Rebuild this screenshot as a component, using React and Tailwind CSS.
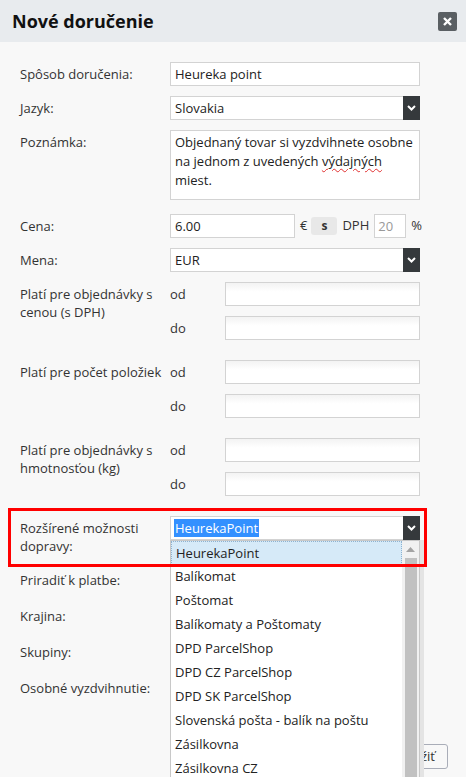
import React from "react"

const font = { fontFamily: '"Open Sans", "Noto Sans", sans-serif' }

const options = [
  "HeurekaPoint",
  "Balíkomat",
  "Poštomat",
  "Balíkomaty a Poštomaty",
  "DPD ParcelShop",
  "DPD CZ ParcelShop",
  "DPD SK ParcelShop",
  "Slovenská pošta - balík na poštu",
  "Zásilkovna",
  "Zásilkovna CZ",
]

const Chevron = () => (
  <svg width="9" height="6" viewBox="0 0 9 6">
    <path d="M1 1 L4.5 4.5 L8 1" stroke="#fff" strokeWidth="2" fill="none" />
  </svg>
)

const Input = ({ value = "", className = "" }) => (
  <div
    className={`h-[24px] border border-[#d3d3d3] bg-gradient-to-b from-[#f3f3f3] to-white to-[40%] px-[4px] text-[13px] leading-[22px] text-[#222] ${className}`}
  >
    {value}
  </div>
)

const Select = ({ value, highlight }) => (
  <div className="flex h-[24px] w-[250px] border border-[#d3d3d3] bg-white">
    <div className="flex-1 px-[3px] pt-[1px] text-[13px] leading-[20px] text-[#222]">
      {highlight ? (
        <span className="bg-[#3390ff] px-[1px] text-white">{value}</span>
      ) : (
        <span className="px-[1px]">{value}</span>
      )}
    </div>
    <div className="-my-px -mr-px flex w-[17px] items-center justify-center bg-[#35393c]">
      <Chevron />
    </div>
  </div>
)

const Label = ({ children, className = "" }) => (
  <div className={`pt-[3px] text-[13px] leading-[18px] text-[#333] ${className}`}>
    {children}
  </div>
)

const RangeRow = ({ label }) => (
  <div className="flex">
    <Label className="w-[150px]">{label}</Label>
    <div className="flex flex-col gap-[10px]">
      <div className="flex">
        <Label className="w-[55px]">od</Label>
        <Input className="w-[195px]" />
      </div>
      <div className="flex">
        <Label className="w-[55px]">do</Label>
        <Input className="w-[195px]" />
      </div>
    </div>
  </div>
)

export default function App() {
  return (
    <div className="h-[777px] w-[466px] overflow-hidden bg-[#f8f8f8]" style={font}>
      <div className="flex h-[42px] items-center justify-between bg-[#e8ebee] pl-[12px] pr-[9px]">
        <h1 className="text-[18px] font-bold text-[#111]">Nové doručenie</h1>
        <button className="flex h-[19px] w-[19px] items-center justify-center rounded-[2px] bg-[#5a5f63]">
          <svg width="9" height="9" viewBox="0 0 9 9">
            <path d="M1 1 L8 8 M8 1 L1 8" stroke="#fff" strokeWidth="2.4" />
          </svg>
        </button>
      </div>

      <div className="flex flex-col px-[20px] pt-[20px]">
        <div className="flex">
          <Label className="w-[150px]">Spôsob doručenia:</Label>
          <Input value="Heureka point" className="w-[250px] from-white" />
        </div>

        <div className="mt-[10px] flex">
          <Label className="w-[150px]">Jazyk:</Label>
          <Select value="Slovakia" />
        </div>

        <div className="mt-[10px] flex">
          <Label className="w-[150px]">Poznámka:</Label>
          <div className="h-[70px] w-[250px] border border-[#d3d3d3] bg-white px-[4px] pt-[2px] text-[13px] leading-[19px] text-[#222]">
            Objednaný tovar si vyzdvihnete osobne na jednom z uvedených{" "}
            <span className="underline decoration-[#e03030] decoration-wavy decoration-1 underline-offset-2">
              výdajných
            </span>{" "}
            miest.
          </div>
        </div>

        <div className="mt-[14px] flex">
          <Label className="w-[150px]">Cena:</Label>
          <div className="flex items-center text-[13px] text-[#333]">
            <Input value="6.00" className="w-[125px] from-white" />
            <span className="ml-[5px]">€</span>
            <span className="ml-[4px] flex h-[18px] w-[26px] items-center justify-center rounded-[3px] bg-[#e8e8e8] text-[12px] font-bold">
              s
            </span>
            <span className="ml-[5px]">DPH</span>
            <div className="ml-[5px] h-[24px] w-[32px] border border-[#d3d3d3] bg-white px-[3px] leading-[22px] text-[#999]">
              20
            </div>
            <span className="ml-[5px]">%</span>
          </div>
        </div>

        <div className="mt-[10px] flex">
          <Label className="w-[150px]">Mena:</Label>
          <Select value="EUR" />
        </div>

        <div className="mt-[10px]">
          <RangeRow
            label={
              <>
                Platí pre objednávky s<br />
                cenou (s DPH)
              </>
            }
          />
        </div>
        <div className="mt-[20px]">
          <RangeRow label="Platí pre počet položiek" />
        </div>
        <div className="mt-[20px]">
          <RangeRow
            label={
              <>
                Platí pre objednávky s<br />
                hmotnosťou (kg)
              </>
            }
          />
        </div>

        <div className="relative mt-[20px] flex">
          <Label className="w-[150px]">
            Rozšírené možnosti
            <br />
            dopravy:
          </Label>
          <div className="relative">
            <Select value="HeurekaPoint" highlight />
            <div className="absolute left-0 top-[24px] z-10 flex h-[260px] w-[250px] border border-[#c8c8c8] bg-white shadow-[4px_0_0_#e4e4e4]">
              <div className="flex-1">
                {options.map((o, i) => (
                  <div
                    key={o}
                    className={`h-[24px] px-[4px] text-[13px] leading-[23px] text-[#222] ${
                      i === 0 ? "border border-dotted border-[#8fb3d0] bg-[#d6eaf8] px-[3px] leading-[22px]" : ""
                    }`}
                  >
                    {o}
                  </div>
                ))}
              </div>
              <div className="flex w-[17px] flex-col items-center bg-[#f1f1f1]">
                <svg className="mt-[6px]" width="9" height="5" viewBox="0 0 9 5">
                  <path d="M0 5 L4.5 0 L9 5 Z" fill="#a3a3a3" />
                </svg>
                <div className="mt-[6px] w-[12px] flex-1 bg-[#c1c1c1]" />
              </div>
            </div>
          </div>
          <div className="pointer-events-none absolute -left-[12px] -top-[8px] z-20 h-[59px] w-[419px] border-[3px] border-[#ff0000]" />
        </div>

        <div className="mt-[13px] flex flex-col gap-[12px]">
          <div className="flex h-[24px]">
            <Label className="w-[150px]">Priradiť k platbe:</Label>
          </div>
          <div className="flex h-[24px]">
            <Label className="w-[150px]">Krajina:</Label>
          </div>
          <div className="flex h-[24px]">
            <Label className="w-[150px]">Skupiny:</Label>
          </div>
          <div className="flex h-[24px]">
            <Label className="w-[150px]">Osobné vyzdvihnutie:</Label>
          </div>
        </div>
      </div>

      <div className="mt-[44px] flex justify-end pr-[18px]">
        <button className="h-[25px] rounded-[3px] border border-[#a9adb8] bg-[#f8f8f8] px-[12px] text-[13px] text-[#333]">
          Uložiť
        </button>
      </div>
    </div>
  )
}
